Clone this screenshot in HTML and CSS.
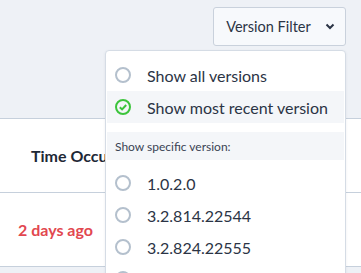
FILE: index.html
```html
<!DOCTYPE html>
<html lang="en">
<head>
    <meta charset="UTF-8">
    <title>Version Filter</title>
    <link rel="stylesheet" href="styles.css">
</head>
<body>
    <div class="toolbar">
        <button class="filter-btn" type="button">
            Version Filter
            <svg class="chevron" width="10" height="7" viewBox="0 0 10 7"><path d="M1.5 1.5 L5 5 L8.5 1.5" fill="none" stroke="#2b3445" stroke-width="2"/></svg>
        </button>
    </div>

    <div class="table">
        <div class="row head">
            <div class="cell">Time Occurred</div>
        </div>
        <div class="row">
            <div class="cell late">2 days ago</div>
        </div>
    </div>

    <!-- menu abierto del filtro -->
    <div class="menu">
        <div class="option">
            <span class="radio"></span>Show all versions
        </div>
        <div class="option selected">
            <svg class="check" width="16" height="16" viewBox="0 0 16 16"><circle cx="8" cy="8" r="7" fill="none" stroke="#3cc43c" stroke-width="2"/><path d="M4.8 8.2 L7.1 10.4 L11.2 6" fill="none" stroke="#3cc43c" stroke-width="2"/></svg>
            Show most recent version
        </div>
        <div class="section">Show specific version:</div>
        <div class="versions">
            <div class="option"><span class="radio"></span>1.0.2.0</div>
            <div class="option"><span class="radio"></span>3.2.814.22544</div>
            <div class="option"><span class="radio"></span>3.2.824.22555</div>
            <div class="option"><span class="radio"></span></div>
        </div>
    </div>
</body>
</html>
```

FILE: styles.css
```css
body {
    margin: 0;
    background: #eef1f6;
    font-family: Lato, "Open Sans", sans-serif;
    color: #2b3445;
    height: 273px;
    overflow: hidden;
    position: relative;
}
.toolbar {
    height: 118px;
    display: flex;
    justify-content: flex-end;
    align-items: flex-start;
    padding: 7px 15px 0 0;
    box-sizing: border-box;
}
.filter-btn {
    height: 39px;
    width: 133px;
    background: #f7f9fc;
    border: 1px solid #c9d1dc;
    border-radius: 3px;
    font-family: inherit;
    font-size: 14.5px;
    color: #2b3445;
    display: flex;
    align-items: center;
    justify-content: center;
    gap: 14px;
    padding: 0 0 0 2px;
}
.table {
    background: #fff;
    border-top: 1px solid #c6d0dc;
}
.row {
    height: 73px;
    border-bottom: 1px solid #c6d0dc;
    display: flex;
    align-items: center;
}
.row .cell {
    white-space: nowrap;
}
.head .cell {
    padding-left: 31px;
    font-weight: 700;
    font-size: 16px;
    color: #1e2836;
}
.late {
    padding-left: 18px;
    font-weight: 700;
    font-size: 16px;
    color: #e2474f;
}
.menu {
    position: absolute;
    left: 105px;
    top: 50px;
    width: 241px;
    height: 240px;
    background: #fff;
    border: 1px solid #d5dce5;
    border-radius: 4px;
    box-sizing: border-box;
    padding: 8px 1px 0;
    box-shadow: 0 1px 3px rgba(40, 55, 80, 0.08);
}
.option {
    height: 32px;
    display: flex;
    align-items: center;
    gap: 16px;
    padding-left: 8px;
    font-size: 16px;
    white-space: nowrap;
}
.option.selected {
    background: #f4f6f9;
}
.radio {
    width: 16px;
    height: 16px;
    border: 2px solid #b4c0cd;
    border-radius: 50%;
    box-sizing: border-box;
    flex: none;
}
.check {
    flex: none;
}
.section {
    margin-top: 9px;
    height: 28px;
    background: #f4f6f9;
    display: flex;
    align-items: center;
    padding-left: 8px;
    font-size: 12px;
    color: #3a4354;
}
.versions {
    padding-top: 7px;
}
```
